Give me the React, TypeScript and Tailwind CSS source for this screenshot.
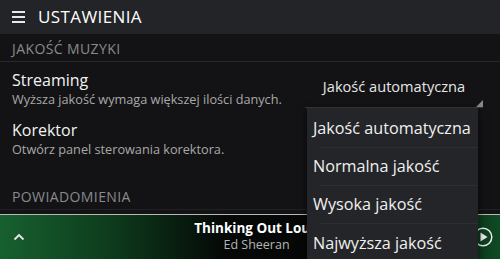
import React from "react";

const font = "font-['Open_Sans','Noto_Sans',sans-serif]";

const options = ["Jakość automatyczna", "Normalna jakość", "Wysoka jakość", "Najwyższa jakość"];

function SettingRow({ title, subtitle }: { title: string; subtitle: string }) {
  return (
    <div className="flex flex-col px-3 pt-2 pb-1">
      <div className="text-[16px] leading-[20px] text-[#f2f2f2]">{title}</div>
      <div className="text-[12.7px] leading-[18px] text-[#a9a9a9] whitespace-nowrap">{subtitle}</div>
    </div>
  );
}

export default function App() {
  return (
    <div className={`relative w-[500px] h-[259px] overflow-hidden bg-[#131315] flex flex-col ${font}`}>
      {/* top bar */}
      <div className="h-[34px] shrink-0 bg-[#232428] flex items-center px-3 gap-[13px] pb-[1px]">
        <div className="flex flex-col gap-[3px] w-[13px]">
          <span className="h-[2px] bg-[#e8e8e8]" />
          <span className="h-[2px] bg-[#e8e8e8]" />
          <span className="h-[2px] bg-[#e8e8e8]" />
        </div>
        <span className="text-[17px] tracking-[0.4px] text-white">USTAWIENIA</span>
      </div>

      {/* section: music quality */}
      <div className="pl-3 pt-[5px] pb-[2px] border-b border-[#27282b]">
        <div className="text-[14px] leading-[20px] tracking-[0.4px] text-[#8a8a8c]">JAKOŚĆ MUZYKI</div>
      </div>

      <div className="flex">
        <div className="flex-1">
          <SettingRow title="Streaming" subtitle="Wyższa jakość wymaga większej ilości danych." />
        </div>
        <div className="w-[178px] mr-[17px] mt-[14px] h-[32px] relative border-b border-[#3a3b3e] flex justify-center">
          <span className="text-[14.6px] leading-[20px] text-[#e6e6e6] whitespace-nowrap">Jakość automatyczna</span>
          <svg className="absolute right-0 bottom-0" width="7" height="7" viewBox="0 0 7 7">
            <polygon points="7,0 7,7 0,7" fill="#8a8a8c" />
          </svg>
        </div>
      </div>
      <SettingRow title="Korektor" subtitle="Otwórz panel sterowania korektora." />

      <div className="pl-3 pt-[25px] pb-[2px] border-b border-[#202124]">
        <div className="text-[14px] leading-[20px] tracking-[0.4px] text-[#8a8a8c]">POWIADOMIENIA</div>
      </div>

      {/* player bar */}
      <div className="mt-auto h-[45px] shrink-0 border-t border-[#b9b9b9] bg-[linear-gradient(90deg,#17602f_0%,#0d3c1c_22%,#050806_45%,#050806_80%,#0c3a1c_95%,#0f4a24_100%)] flex items-center px-3 relative">
        <svg width="12" height="8" viewBox="0 0 12 8" className="ml-[1px]">
          <polyline points="1.5,6.5 6,2 10.5,6.5" fill="none" stroke="#e8e8e8" strokeWidth="1.8" />
        </svg>
        <div className="flex-1 flex flex-col items-center -mt-[2px]">
          <span className="text-[13.5px] leading-[17px] font-bold text-white">Thinking Out Loud</span>
          <span className="text-[12.5px] leading-[16px] text-[#b5b5b5]">Ed Sheeran</span>
        </div>
        <svg width="20" height="20" viewBox="0 0 20 20" className="absolute right-[7px] top-[12px]">
          <circle cx="10" cy="10" r="8.8" fill="none" stroke="#ededed" strokeWidth="1.5" />
          <polygon points="7.5,5.5 14.5,10 7.5,14.5" fill="#ededed" />
        </svg>
      </div>

      {/* open dropdown menu */}
      <div className="absolute left-[307px] top-[108px] w-[171px] bg-[#242528] pt-[2px] shadow-[0_2px_8px_rgba(0,0,0,0.6)]">
        {options.map((o, i) => (
          <div key={o} className="h-[38px] flex flex-col">
            <div className="flex-1 flex items-center pl-[6px] text-[16.2px] text-[#f0f0f0] whitespace-nowrap">{o}</div>
            {i < options.length - 1 && <div className="ml-[13px] h-px bg-[#2e2f33]" />}
          </div>
        ))}
      </div>
    </div>
  );
}
